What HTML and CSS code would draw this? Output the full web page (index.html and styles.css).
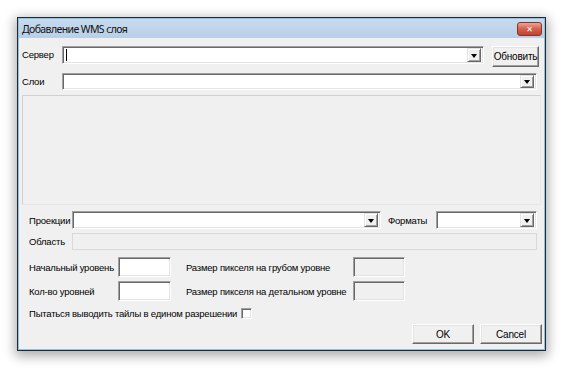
FILE: index.html
```html
<!DOCTYPE html>
<html>
<head>
    <title>Добавление WMS слоя</title>
    <meta http-equiv="Content-Type" content="text/html;charset=utf-8"/>
    <link rel="stylesheet" href="styles.css">
</head>
<body>
<div class="window">
    <div class="caption">
        <span class="caption-text">Добавление WMS слоя</span>
        <span class="close">&#x2715;</span>
    </div>
    <div class="client">
        <div class="row row-server">
            <span class="lbl lbl-top">Сервер</span>
            <div class="combo combo-server"><span class="caret"></span><span class="drop"></span></div>
            <span class="btn btn-refresh">Обновить</span>
        </div>
        <div class="row row-layers">
            <span class="lbl lbl-top">Слои</span>
            <div class="combo combo-layers"><span class="drop"></span></div>
        </div>
        <div class="listbox"></div>
        <div class="row row-proj">
            <span class="lbl lbl-proj">Проекции</span>
            <div class="combo combo-proj"><span class="drop"></span></div>
            <span class="lbl lbl-fmt">Форматы</span>
            <div class="combo combo-fmt"><span class="drop"></span></div>
        </div>
        <div class="row row-area">
            <span class="lbl lbl-proj">Область</span>
            <div class="field field-area"></div>
        </div>
        <div class="row row-level">
            <span class="lbl lbl-level">Начальный уровень</span>
            <div class="edit"></div>
            <span class="lbl lbl-px">Размер пикселя на грубом уровне</span>
            <div class="field field-px"></div>
        </div>
        <div class="row row-level2">
            <span class="lbl lbl-level">Кол-во уровней</span>
            <div class="edit"></div>
            <span class="lbl lbl-px">Размер пикселя на детальном уровне</span>
            <div class="field field-px"></div>
        </div>
        <div class="row row-check">
            <span class="lbl lbl-check">Пытаться выводить тайлы в едином разрешении</span>
            <span class="check"></span>
        </div>
        <div class="row row-buttons">
            <span class="btn btn-dlg">OK</span>
            <span class="btn btn-dlg">Cancel</span>
        </div>
    </div>
</div>
</body>
</html>
```
FILE: styles.css
```css
* { box-sizing: border-box; }
body {
    margin: 0;
    padding: 0;
    background: #fff;
    font: 9.5px "Liberation Sans", Arial, sans-serif;
    letter-spacing: -0.2px;
    color: #000;
    width: 566px;
    height: 368px;
    overflow: hidden;
}

.window {
    margin: 17px 0 0 17px;
    width: 529px;
    height: 334px;
    border: 1px solid #1f2a33;
    box-shadow: 0 3px 11px 2px rgba(0,0,0,0.33), inset 0 0 0 1px #8fc2e0;
    background: #f0f0f0;
    padding: 1px;
}

.caption {
    height: 19px;
    background: linear-gradient(#c7dbef, #b8cfe7);
    display: flex;
    align-items: center;
    justify-content: space-between;
    padding: 0 2px 0 3px;
}
.caption-text {
    font: 10.5px "Noto Sans", "Liberation Sans", sans-serif;
    color: #111;
    letter-spacing: -0.6px;
}
.close {
    width: 25px;
    height: 14px;
    margin-top: 1px;
    border: 1px solid #8a3328;
    border-radius: 3px;
    background: linear-gradient(#eba595, #d4604e 50%, #c3412f);
    color: #fff;
    font: bold 8px "DejaVu Sans", sans-serif;
    letter-spacing: 0;
    display: flex;
    align-items: center;
    justify-content: center;
}

.client {
    padding: 8px 0 0 3px;
}

.row {
    display: flex;
    align-items: center;
}
.lbl { white-space: nowrap; }
.lbl-top { width: 40px; }
.lbl-proj { width: 43px; }
.lbl-fmt { width: 48px; margin-left: 7px; }
.lbl-level { width: 89px; }
.lbl-px { width: 167px; margin-left: 15px; }
.lbl-check { width: 212px; }

/* sunken edit look */
.combo, .edit, .field, .check {
    border: 1px solid;
    border-color: #a0a0a0 #fff #fff #a0a0a0;
    box-shadow: inset 1px 1px 0 #696969, inset -1px -1px 0 #e3e3e3;
}
.combo, .edit { background: #fff; }
.field { background: #f0f0f0; }

.combo {
    height: 18px;
    display: flex;
    align-items: center;
    justify-content: flex-end;
    padding: 2px;
}
.drop {
    width: 14px;
    height: 14px;
    background: #f0f0f0;
    border: 1px solid;
    border-color: #e3e3e3 #696969 #696969 #e3e3e3;
    box-shadow: inset 1px 1px 0 #fff, inset -1px -1px 0 #a0a0a0;
    display: flex;
    align-items: center;
    justify-content: center;
}
.drop::after {
    content: "";
    border-left: 3px solid transparent;
    border-right: 3px solid transparent;
    border-top: 4px solid #000;
    margin-top: 1px;
}
.caret {
    width: 1px;
    height: 12px;
    background: #000;
    margin-right: auto;
    margin-left: 1px;
}

.btn {
    display: flex;
    align-items: center;
    justify-content: center;
    background: #f0f0f0;
    border: 1px solid;
    border-color: #fff #696969 #696969 #fff;
    box-shadow: inset -1px -1px 0 #a0a0a0, inset 1px 1px 0 #e3e3e3;
    font-size: 10px;
}

.row-server { align-items: flex-start; height: 21px; }
.row-server .lbl { line-height: 18px; }
.combo-server { width: 422px; }
.btn-refresh { width: 47px; height: 21px; margin-left: 8px; }

.row-layers { margin-top: 6px; }
.combo-layers { width: 475px; height: 17px; }
.combo-layers .drop { height: 13px; }

.listbox {
    margin-top: 5px;
    width: 519px;
    height: 110px;
    background: #f0f0f0;
    border: 1px solid;
    border-color: #d0d0d0 #e8e8e8 #e8e8e8 #d0d0d0;
}

.row-proj { margin-top: 6px; padding-left: 7px; }
.combo-proj { width: 309px; }
.combo-fmt { width: 101px; }

.row-area { margin-top: 4px; padding-left: 7px; }
.field-area {
    width: 465px;
    height: 17px;
    border: 1px solid #d8d8d8;
    box-shadow: none;
}

.row-level { margin-top: 7px; padding-left: 7px; }
.row-level2 { margin-top: 4px; padding-left: 7px; }
.edit { width: 53px; height: 20px; }
.field-px { width: 52px; height: 20px; }

.row-check { margin-top: 7px; padding-left: 7px; height: 11px; }
.check {
    width: 11px;
    height: 11px;
    background: #fff;
}

.row-buttons {
    margin-top: 5px;
    width: 520px;
    justify-content: flex-end;
    gap: 6px;
}
.btn-dlg { width: 62px; height: 20px; }
```
